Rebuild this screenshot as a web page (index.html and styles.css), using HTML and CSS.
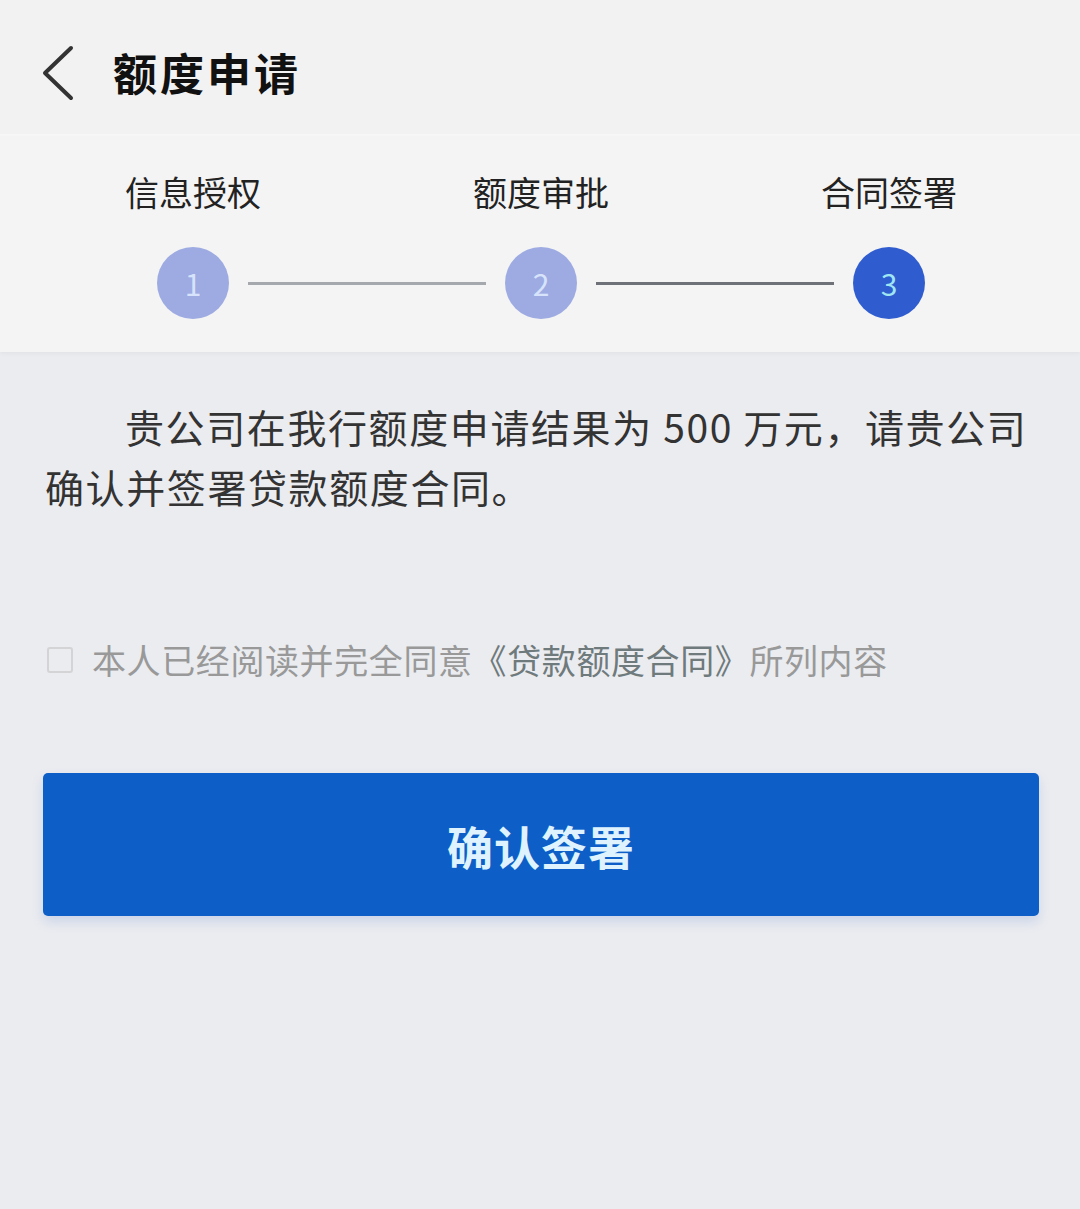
FILE: index.html
```html
<!DOCTYPE html>
<html lang="zh-CN">
<head>
    <meta charset="UTF-8">
    <meta name="viewport" content="width=device-width, initial-scale=1.0">
    <title>额度申请</title>
    <link rel="stylesheet" href="styles.css">
</head>
<body>
    <header class="top-bar">
        <a class="back" href="#">
            <svg width="36" height="56" viewBox="0 0 36 56"><polyline points="30,3 4,28 30,53" fill="none" stroke="#333" stroke-width="4" stroke-linecap="round" stroke-linejoin="round"/></svg>
        </a>
        <h1>额度申请</h1>
    </header>

    <section class="steps">
        <div class="step-labels">
            <span>信息授权</span>
            <span>额度审批</span>
            <span>合同签署</span>
        </div>
        <div class="step-track">
            <span class="dot done">1</span>
            <span class="line"></span>
            <span class="dot done">2</span>
            <span class="line dark"></span>
            <span class="dot active">3</span>
        </div>
    </section>

    <main class="content">
        <p class="result">贵公司在我行额度申请结果为 500 万元，请贵公司确认并签署贷款额度合同。</p>

        <label class="agree">
            <span class="box"></span>
            <span>本人已经阅读并完全同意<em>《贷款额度合同》</em>所列内容</span>
        </label>

        <button class="confirm">确认签署</button>
    </main>
</body>
</html>
```

FILE: styles.css
```css
body {
    margin: 0;
    padding: 0;
    background: #ebecf0;
    font-family: "Noto Sans CJK SC", "Noto Sans", sans-serif;
    color: #333;
    width: 1080px;
    height: 1209px;
    overflow: hidden;
}
.top-bar {
    height: 136px;
    background: #f2f2f2;
    display: flex;
    align-items: center;
    padding-top: 10px;
    border-bottom: 2px solid #f7f7f7;
    box-sizing: border-box;
}
.back {
    display: flex;
    margin-left: 41px;
    margin-top: 2px;
}
.top-bar h1 {
    margin: 0 0 0 36px;
    font-size: 44px;
    font-weight: 700;
    color: #111;
    letter-spacing: 3px;
}
.steps {
    background: #f4f4f4;
    height: 216px;
    box-sizing: border-box;
    padding-top: 31px;
    box-shadow: 0 2px 4px rgba(0, 0, 0, 0.04);
}
.step-labels {
    display: grid;
    grid-template-columns: repeat(3, 348px);
    padding-left: 19px;
    text-align: center;
    font-size: 34px;
    line-height: 50px;
    color: #222;
}
.step-track {
    display: flex;
    align-items: center;
    padding: 0 155px 0 157px;
    margin-top: 30px;
}
.dot {
    width: 72px;
    height: 72px;
    border-radius: 50%;
    display: flex;
    align-items: center;
    justify-content: center;
    font-size: 30px;
    flex: none;
}
.dot.done {
    background: #9dabe2;
    color: #d7e3fa;
}
.dot.active {
    background: #2f5ccf;
    color: #9fe6f2;
}
.line {
    flex: 1;
    height: 3px;
    margin: 0 19px;
    background: #a5a8ad;
}
.line.dark {
    background: #6e7278;
}
.content {
    padding: 0 41px 0 43px;
}
.result {
    margin: 44px 0 0 2px;
    font-size: 39px;
    line-height: 60px;
    letter-spacing: 1.6px;
    text-indent: 80px;
    color: #333;
}
.agree {
    display: flex;
    align-items: center;
    margin-top: 119px;
    font-size: 34px;
    letter-spacing: 0.6px;
    color: #999;
}
.agree .box {
    width: 22px;
    height: 22px;
    border: 2px solid #d4d4d6;
    border-radius: 3px;
    margin: 0 19px 0 4px;
    flex: none;
}
.agree em {
    font-style: normal;
    color: #6f7a7c;
}
.confirm {
    display: block;
    width: 996px;
    height: 143px;
    margin-top: 89px;
    border: none;
    border-radius: 5px;
    background: #0d5fc7;
    color: #dff3ff;
    font-family: inherit;
    font-size: 46px;
    font-weight: 700;
    letter-spacing: 1px;
    box-shadow: 0 6px 12px rgba(60, 110, 200, 0.18);
    cursor: pointer;
}
```
